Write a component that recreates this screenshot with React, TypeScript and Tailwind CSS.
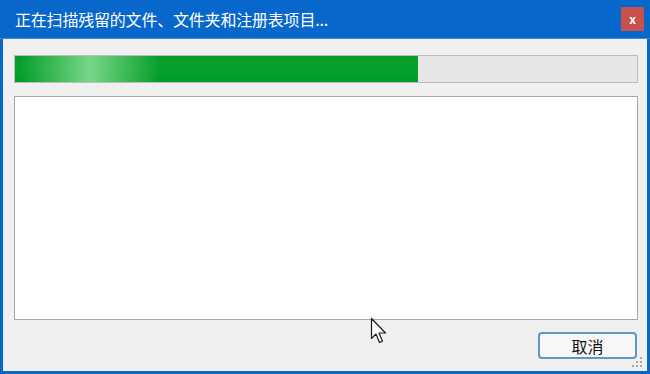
import React from "react";

const font = '"Microsoft YaHei", "Noto Sans CJK SC", "Liberation Sans", sans-serif';

function Cursor() {
  return (
    <svg width="19" height="28" viewBox="0 0 19 28" className="absolute left-[370px] top-[317px]">
      <path
        d="M1.5 1.5 L1.5 21.5 L6 17 L9.5 25.5 L12.5 24.2 L9 16 L15.5 16 Z"
        fill="#ffffff"
        stroke="#1a1a1a"
        strokeWidth="1.2"
        strokeLinejoin="round"
      />
    </svg>
  );
}

function Grip() {
  const dots = [
    [8, 0],
    [4, 4],
    [8, 4],
    [0, 8],
    [4, 8],
    [8, 8],
  ];
  return (
    <div className="absolute right-[5px] bottom-[4px] h-[10px] w-[10px]">
      {dots.map(([x, y], i) => (
        <span
          key={i}
          className="absolute h-[2px] w-[2px] bg-[#a8a8a8]"
          style={{ left: x, top: y }}
        />
      ))}
    </div>
  );
}

export default function App() {
  return (
    <div
      className="relative flex h-[374px] w-[650px] flex-col bg-[#0767cb]"
      style={{ fontFamily: font }}
    >
      {/* title bar */}
      <div className="flex h-[39px] items-center justify-between border-b border-[#3f8ad8] pl-[15px] pr-[6px]">
        <span className="text-[16px] leading-none tracking-[-0.2px] text-white">正在扫描残留的文件、文件夹和注册表项目...</span>
        <div className="grid h-[24px] w-[23px] place-items-center bg-[#c9514b] text-[12px] font-bold leading-none text-white">
          x
        </div>
      </div>

      {/* body */}
      <div className="relative mx-[3px] mb-[3px] flex flex-1 flex-col bg-[#f0f0f0] pt-[16px] pb-[12px] pl-[11px] pr-[9px]">
        <div className="relative h-[28px] border border-[#bcbcbc] bg-[#e6e6e6]">
          <div className="relative h-full w-[403px] overflow-hidden bg-[linear-gradient(180deg,#089a2a_0%,#05a22b_40%,#049a27_100%)]">
            <div className="absolute inset-y-0 left-[5px] w-[140px] bg-[linear-gradient(90deg,rgba(120,215,135,0)_0%,rgba(120,215,135,0.6)_30%,rgba(125,218,140,0.95)_50%,rgba(120,215,135,0.6)_70%,rgba(120,215,135,0)_100%)]" />
          </div>
        </div>

        <div className="mt-[13px] h-[224px] border border-[#a6a6a6] bg-white" />

        <div className="mt-[12px] flex justify-end pr-[1px]">
          <button className="h-[27px] w-[99px] rounded-[4px] border-2 border-[#5d97cc] bg-[#f7f7f7] text-[16px] leading-none text-[#111]">
            取消
          </button>
        </div>

        <Grip />
      </div>

      <Cursor />
    </div>
  );
}
